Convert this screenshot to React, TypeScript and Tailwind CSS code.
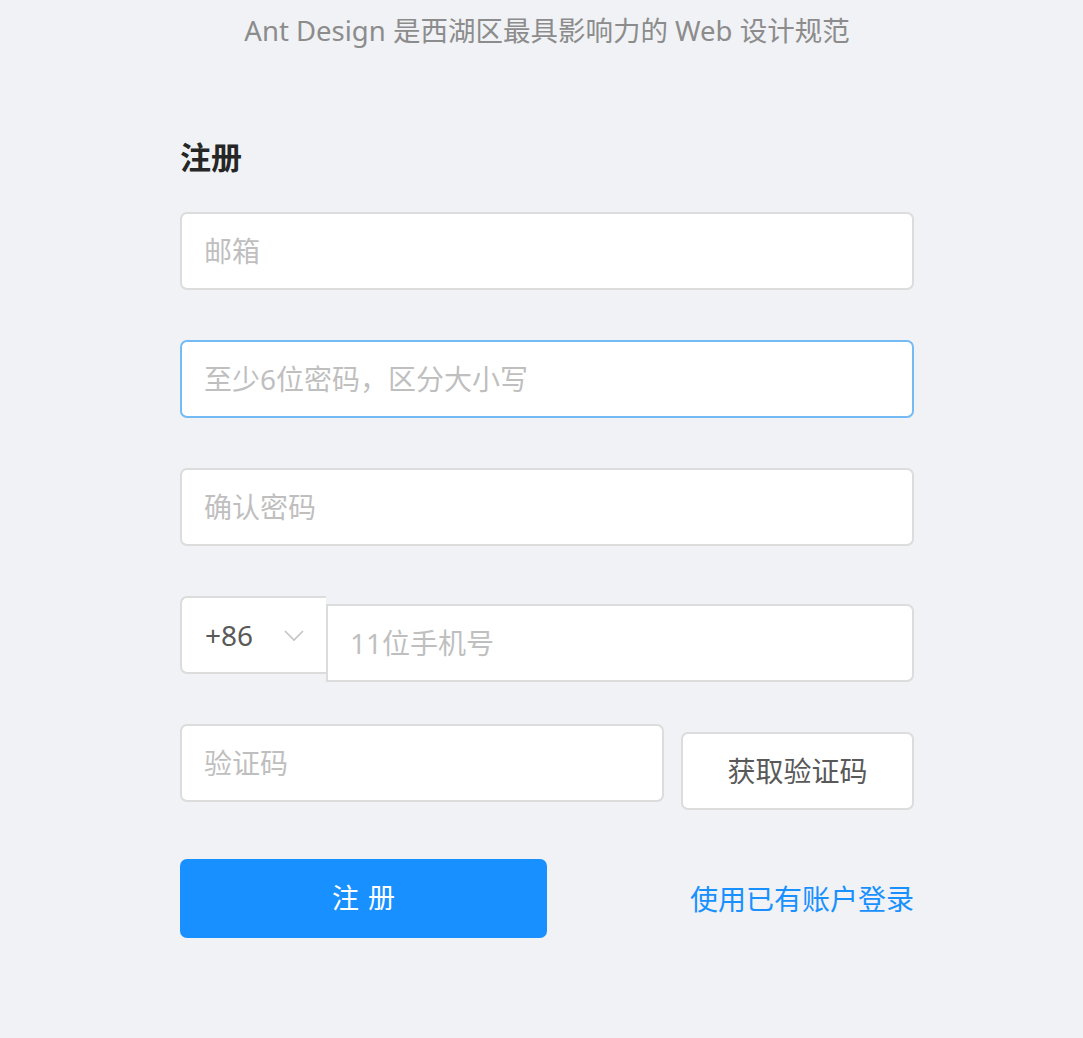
const font = { fontFamily: '"Noto Sans", "Noto Sans CJK SC", sans-serif' }

const inputBase =
    "h-[78px] w-full bg-white border-2 border-[#dcdcdc] rounded-[7px] px-[22px] text-[28px] text-[#262626] placeholder:text-[#bfbfbf] outline-none"

export default function App() {
    return (
        <div className="min-h-[1038px] bg-[#f0f2f5]" style={font}>
            {/* Tagline */}
            <div className="pl-[11px] pt-[11px] text-center text-[27.5px] leading-[40px] text-[#8c8c8c]">
                Ant Design 是西湖区最具影响力的 Web 设计规范
            </div>

            <div className="ml-[180px] w-[734px] pt-[85px]">
                <h3 className="text-[31px] leading-[42px] font-semibold text-[#262626]">注册</h3>

                <div className="mt-[34px] flex flex-col gap-[50px]">
                    <input className={inputBase} placeholder="邮箱" />
                    <input
                        className={`${inputBase} !border-[#74bbf5]`}
                        placeholder="至少6位密码，区分大小写"
                    />
                    <input className={inputBase} placeholder="确认密码" />

                    {/* Phone */}
                    <div className="h-[78px] flex items-start">
                        <div className="h-[78px] w-[146px] shrink-0 bg-white border-2 border-[#dcdcdc] border-r-0 rounded-l-[7px] flex items-center justify-between pl-[23px] pr-[22px] text-[28px] text-[#595959]">
                            <span>+86</span>
                            <svg width="20" height="12" viewBox="0 0 20 12" fill="none" className="mt-[2px]">
                                <polyline points="1,1 10,10 19,1" stroke="#c4c4c4" strokeWidth="1.6" />
                            </svg>
                        </div>
                        <input
                            className="mt-[8px] h-[78px] flex-1 min-w-0 bg-white border-2 border-[#dcdcdc] rounded-r-[7px] px-[22px] text-[28px] placeholder:text-[#bfbfbf] outline-none"
                            placeholder="11位手机号"
                        />
                    </div>

                    {/* Captcha */}
                    <div className="h-[78px] flex items-start gap-[17px]">
                        <input className={`${inputBase} !w-[484px]`} placeholder="验证码" />
                        <button className="mt-[8px] h-[78px] flex-1 bg-white border-2 border-[#dcdcdc] rounded-[7px] text-[28px] text-[#595959]">
                            获取验证码
                        </button>
                    </div>

                    {/* Submit */}
                    <div className="mt-[7px] flex items-center justify-between">
                        <button className="h-[79px] w-[367px] bg-[#1890ff] rounded-[7px] text-white text-[27px]">
                            <span className="tracking-[0.34em] mr-[-0.34em]">注册</span>
                        </button>
                        <a href="#" className="text-[28px] text-[#1890ff]">
                            使用已有账户登录
                        </a>
                    </div>
                </div>
            </div>
        </div>
    )
}
